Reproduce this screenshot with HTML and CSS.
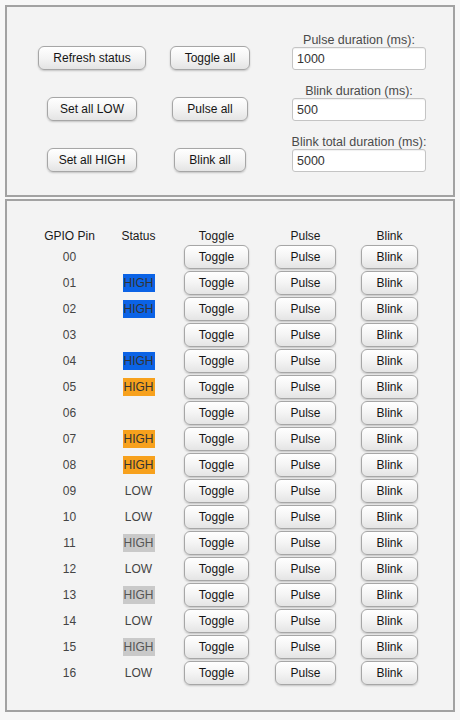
FILE: index.html
```html
<!DOCTYPE html>
<html lang="en">
  <head>
    <meta charset="UTF-8" />
    <meta name="viewport" content="width=device-width, initial-scale=1.0" />
    <title>GPIO Control</title>
    <link rel="stylesheet" href="styles.css">
  </head>
  <body>
    <!-- global controls -->
    <div class="panel controls">
      <div class="controls-grid">
        <button class="btn">Refresh status</button>
        <button class="btn">Toggle all</button>
        <div class="field">
          <label for="pulse">Pulse duration (ms):</label>
          <input id="pulse" type="text" value="1000" />
        </div>

        <button class="btn wide">Set all LOW</button>
        <button class="btn">Pulse all</button>
        <div class="field">
          <label for="blink">Blink duration (ms):</label>
          <input id="blink" type="text" value="500" />
        </div>

        <button class="btn wide">Set all HIGH</button>
        <button class="btn">Blink all</button>
        <div class="field">
          <label for="blink-total">Blink total duration (ms):</label>
          <input id="blink-total" type="text" value="5000" />
        </div>
      </div>
    </div>

    <!-- per pin -->
    <div class="panel pins">
      <table class="pin-table">
        <thead>
          <tr>
            <th class="col-pin">GPIO Pin</th>
            <th class="col-status">Status</th>
            <th class="col-toggle">Toggle</th>
            <th class="col-pulse">Pulse</th>
            <th class="col-blink">Blink</th>
          </tr>
        </thead>
        <tbody id="pin-rows"></tbody>
      </table>
    </div>

    <script>
      // status of each pin: "" = unknown, "low", or the colour of a HIGH badge
      const pins = [
        "", "blue", "blue", "", "blue", "orange", "", "orange", "orange",
        "low", "low", "gray", "low", "gray", "low", "gray", "low"
      ];

      const tbody = document.getElementById("pin-rows");
      pins.forEach((state, i) => {
        const num = String(i).padStart(2, "0");
        let status = "";
        if (state === "low") {
          status = "LOW";
        } else if (state) {
          status = `<span class="badge ${state}">HIGH</span>`;
        }
        const tr = document.createElement("tr");
        tr.innerHTML = `
          <td>${num}</td>
          <td>${status}</td>
          <td><button class="btn">Toggle</button></td>
          <td><button class="btn">Pulse</button></td>
          <td><button class="btn">Blink</button></td>`;
        tbody.appendChild(tr);
      });
    </script>
  </body>
</html>
```

FILE: styles.css
```css
body {
  margin: 5px;
  font-family: "Liberation Sans", Arial, sans-serif;
  font-size: 12px;
  color: #444;
  background-color: #f7f7f7;
}

.panel {
  box-sizing: border-box;
  border: 2px solid #a2a2a2;
  background-color: #f3f3f3;
}

.controls {
  height: 192px;
  padding: 26px 0 0 25px;
  margin-bottom: 2px;
}

.controls-grid {
  display: grid;
  grid-template-columns: 120px 116px 158px;
  row-gap: 14px;
  align-items: end;
  justify-items: center;
}

.field {
  justify-self: end;
  width: 134px;
  display: flex;
  flex-direction: column;
  align-items: center;
}

.field label {
  font-size: 12.5px;
  line-height: 14px;
  white-space: nowrap;
  color: #4a4a4a;
}

.field input {
  box-sizing: border-box;
  width: 134px;
  height: 23px;
  padding: 0 4px;
  border: 1px solid #c4c4c4;
  border-radius: 3px;
  background: #fff;
  box-shadow: inset 0 1px 1px rgba(0, 0, 0, 0.06);
  font-family: "Liberation Sans", Arial, sans-serif;
  font-size: 12.5px;
  color: #333;
}

.btn {
  box-sizing: border-box;
  height: 24px;
  padding: 0 14px;
  border: 1px solid #a6a6a6;
  border-radius: 6px;
  background: linear-gradient(#ffffff, #f4f4f4 50%, #e4e4e4);
  box-shadow: 0 1px 2px rgba(0, 0, 0, 0.2);
  font-family: "Liberation Sans", Arial, sans-serif;
  font-size: 12px;
  color: #151515;
  cursor: pointer;
}

.btn.wide {
  width: 90px;
  padding: 0;
}

.pins {
  height: 513px;
  padding: 26px 0 0 3px;
}

.pin-table {
  margin: 0 auto;
  border-collapse: collapse;
  text-align: center;
}

.pin-table th {
  height: 17px;
  padding: 0;
  font-weight: normal;
  color: #1a1a1a;
}

.pin-table td {
  height: 26px;
  padding: 0;
}

.col-pin { width: 70px; }
.col-status { width: 68px; }
.col-toggle { width: 88px; }
.col-pulse { width: 90px; }
.col-blink { width: 78px; }

.badge {
  display: inline-block;
  line-height: 18px;
  padding: 0 1px;
  color: #333;
}

.badge.blue { background-color: #0b63e6; }
.badge.orange { background-color: #f7a11d; }
.badge.gray { background-color: #c9c9c9; color: #555; }
```
